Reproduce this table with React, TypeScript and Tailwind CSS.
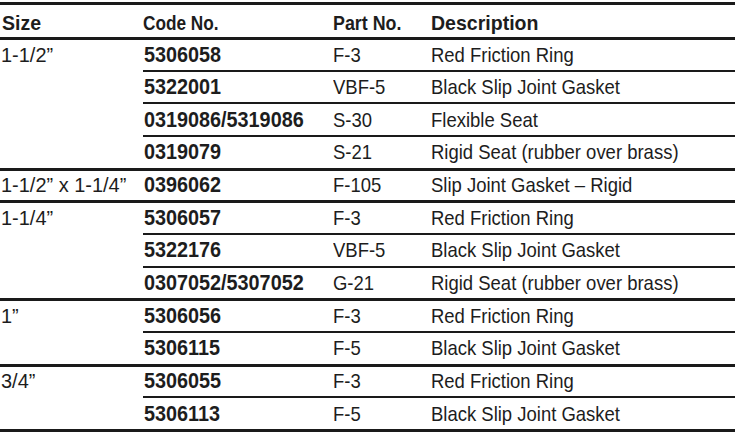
type Part = {
  code: string
  part: string
  desc: string
}

type Group = {
  size: string
  rows: Part[]
}

const groups: Group[] = [
  {
    size: "1-1/2”",
    rows: [
      { code: "5306058", part: "F-3", desc: "Red Friction Ring" },
      { code: "5322001", part: "VBF-5", desc: "Black Slip Joint Gasket" },
      { code: "0319086/5319086", part: "S-30", desc: "Flexible Seat" },
      { code: "0319079", part: "S-21", desc: "Rigid Seat (rubber over brass)" },
    ],
  },
  {
    size: "1-1/2” x 1-1/4”",
    rows: [{ code: "0396062", part: "F-105", desc: "Slip Joint Gasket – Rigid" }],
  },
  {
    size: "1-1/4”",
    rows: [
      { code: "5306057", part: "F-3", desc: "Red Friction Ring" },
      { code: "5322176", part: "VBF-5", desc: "Black Slip Joint Gasket" },
      { code: "0307052/5307052", part: "G-21", desc: "Rigid Seat (rubber over brass)" },
    ],
  },
  {
    size: "1”",
    rows: [
      { code: "5306056", part: "F-3", desc: "Red Friction Ring" },
      { code: "5306115", part: "F-5", desc: "Black Slip Joint Gasket" },
    ],
  },
  {
    size: "3/4”",
    rows: [
      { code: "5306055", part: "F-3", desc: "Red Friction Ring" },
      { code: "5306113", part: "F-5", desc: "Black Slip Joint Gasket" },
    ],
  },
]

function PartRow({ row, first }: { row: Part; first: boolean }) {
  return (
    <div
      className={
        first
          ? "flex h-[29.67px] items-center pl-[1px] leading-[22px]"
          : "flex h-[32.67px] items-center border-t-2 border-[#1a1a1a] pl-[1px] leading-[22px]"
      }
    >
      <div className="w-[189px] shrink-0 text-[22px] font-bold">
        <span className="inline-block origin-left scale-x-[0.9] whitespace-nowrap">{row.code}</span>
      </div>
      <div className="w-[98px] shrink-0">
        <span className="inline-block origin-left scale-x-[0.88] whitespace-nowrap">{row.part}</span>
      </div>
      <div className="flex-1">
        <span className="inline-block origin-left scale-x-[0.88] whitespace-nowrap">{row.desc}</span>
      </div>
    </div>
  )
}

export default function App() {
  return (
    <div className="h-[436px] w-[735px] bg-white pt-[2px] text-[21px] text-[#1d1d1d] [font-family:'Liberation_Sans',Arial,sans-serif]">
      {/* header */}
      <div className="flex h-[35px] border-t-[3px] border-[#1a1a1a] pl-[2px] pt-[6px] text-[21px] font-bold leading-[24px]">
        <div className="w-[141px] shrink-0">
          <span className="inline-block origin-left scale-x-[0.93]">Size</span>
        </div>
        <div className="w-[190px] shrink-0">
          <span className="inline-block origin-left scale-x-[0.82] whitespace-nowrap">Code No.</span>
        </div>
        <div className="w-[98px] shrink-0">
          <span className="inline-block origin-left scale-x-[0.85] whitespace-nowrap">Part No.</span>
        </div>
        <div className="flex-1">
          <span className="inline-block origin-left scale-x-[0.93]">Description</span>
        </div>
      </div>

      {groups.map((g) => (
        <div key={g.size} className="flex border-t-[3px] border-[#1a1a1a]">
          <div className="flex h-[29.67px] w-[143px] shrink-0 items-center pl-[1px] leading-[22px]">
            <span className="inline-block origin-left scale-x-[0.95] whitespace-nowrap">{g.size}</span>
          </div>
          <div className="flex-1">
            {g.rows.map((r, i) => (
              <PartRow key={r.code} row={r} first={i === 0} />
            ))}
          </div>
        </div>
      ))}
      <div className="border-t-[3px] border-[#1a1a1a]" />
    </div>
  )
}
